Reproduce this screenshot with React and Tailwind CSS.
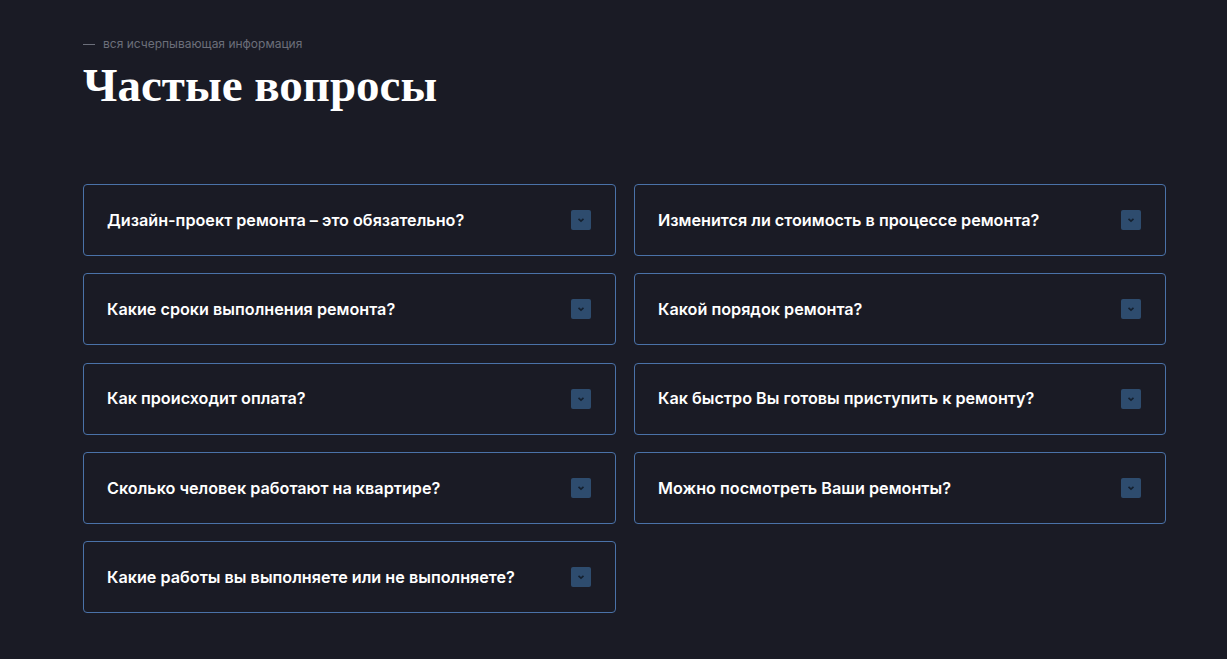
const questions = [
  'Дизайн-проект ремонта – это обязательно?',
  'Изменится ли стоимость в процессе ремонта?',
  'Какие сроки выполнения ремонта?',
  'Какой порядок ремонта?',
  'Как происходит оплата?',
  'Как быстро Вы готовы приступить к ремонту?',
  'Сколько человек работают на квартире?',
  'Можно посмотреть Ваши ремонты?',
  'Какие работы вы выполняете или не выполняете?',
];

function Chevron() {
  return (
    <span className="flex h-5 w-5 shrink-0 items-center justify-center rounded-[2px] bg-[#2e4c6e]">
      <svg width="8" height="6" viewBox="0 0 8 6" fill="none">
        <path d="M1.5 1.8 4 4.2 6.5 1.8" stroke="#14202f" strokeWidth="1.6" />
      </svg>
    </span>
  );
}

function Item({ text }) {
  return (
    <div className="flex h-[72px] items-center justify-between rounded-[4px] border border-[#4a72a8] pl-[23px] pr-6">
      <span className="text-[16.2px] font-semibold text-white">{text}</span>
      <Chevron />
    </div>
  );
}

export default function App() {
  return (
    <div
      className="min-h-screen bg-[#1a1b25] px-[83px] pt-[35px]"
      style={{ fontFamily: 'Inter, "Noto Sans", sans-serif' }}
    >
      <div className="flex items-center gap-[8px] text-[12px] text-[#6c6f7a]">
        <span className="h-px w-[12px] bg-[#6c6f7a]" />
        <span>вся исчерпывающая информация</span>
      </div>
      <h1
        className="mt-[5px] text-[47px] font-bold leading-[54px] text-white"
        style={{ fontFamily: '"Liberation Serif", serif' }}
      >
        Частые вопросы
      </h1>
      <div className="mt-[72px] grid w-[1083px] grid-cols-[533px_532px] gap-x-[18px] gap-y-[17.25px]">
        {questions.map((q) => (
          <Item key={q} text={q} />
        ))}
      </div>
    </div>
  );
}
